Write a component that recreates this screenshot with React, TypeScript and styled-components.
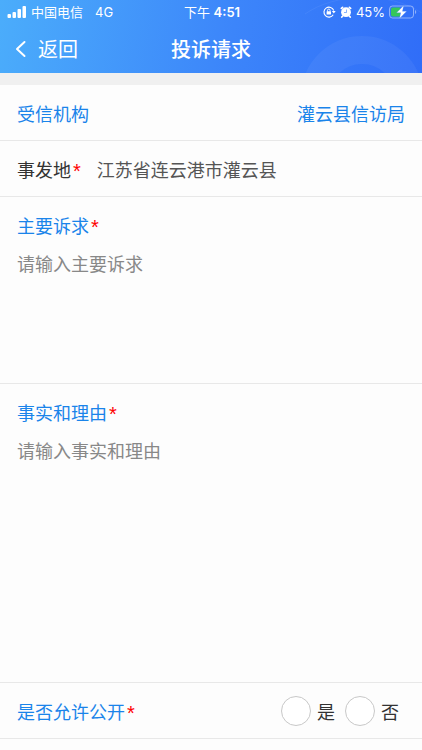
import React, { useState } from "react";
import styled, { createGlobalStyle } from "styled-components";

const cjk = `"Noto Sans CJK SC", sans-serif`;
const latin = `Inter, "Noto Sans CJK SC", sans-serif`;

const GlobalStyle = createGlobalStyle`
  *, *::before, *::after { box-sizing: border-box; }
  body { margin: 0; background: #fdfdfd; font-family: ${cjk}; font-size: 18px; line-height: 28px; color: #333; }
  input, textarea, button { font: inherit; color: inherit; }
`;

const Header = styled.header`
  position: relative;
  overflow: hidden;
  color: #fff;
  background: linear-gradient(100deg, #4badfb 0%, #3c85fa 55%, #306df8 100%);
`;

const Rings = styled.svg`
  position: absolute;
  right: 0;
  top: 0;
  width: 122px;
  height: 100%;
`;

const StatusBar = styled.div`
  position: relative;
  display: grid;
  grid-template-columns: 1fr auto 1fr;
  align-items: center;
  height: 24px;
  padding: 0 5px 0 7px;
  font-family: ${latin};
  font-size: 13px;
  line-height: 20px;
`;

const StatusGroup = styled.div<{ $end?: boolean }>`
  display: flex;
  align-items: center;
  justify-content: ${(p) => (p.$end ? "flex-end" : "flex-start")};
  gap: 4px;
`;

const Network = styled.span`
  margin-left: 8px;
`;

const Clock = styled.time`
  white-space: nowrap;
`;

const Digits = styled.span`
  font-weight: 600;
`;

const NavBar = styled.nav`
  position: relative;
  display: grid;
  grid-template-columns: 1fr auto 1fr;
  align-items: center;
  height: 49px;
  padding: 0 14px;
`;

const BackButton = styled.button`
  display: flex;
  align-items: center;
  justify-self: start;
  gap: 10px;
  padding: 0;
  border: 0;
  background: none;
  font-size: 20px;
`;

const Title = styled.h1`
  margin: 0;
  font-size: 20px;
  font-weight: 500;
`;

const Form = styled.form`
  border-top: 12px solid #f0f0f0;
`;

const Row = styled.div<{ $spread?: boolean }>`
  display: flex;
  align-items: center;
  justify-content: ${(p) => (p.$spread ? "space-between" : "flex-start")};
  gap: 16px;
  min-height: 56px;
  padding: 0 17px;
  border-bottom: 1px solid #e8e8e8;
`;

const Label = styled.label<{ $dark?: boolean }>`
  display: flex;
  align-items: center;
  gap: 2px;
  flex: none;
  color: ${(p) => (p.$dark ? "#333" : "#1a84ea")};
`;

const Star = styled.span`
  padding-top: 4px;
  color: #f00;
  font-family: "Liberation Sans", sans-serif;
  font-size: 20px;
  line-height: 22px;
`;

const Agency = styled.output`
  color: #1a84ea;
`;

const PlaceInput = styled.input`
  flex: 1;
  min-width: 0;
  padding: 0;
  border: 0;
  outline: 0;
  background: none;
  color: #555;
`;

const Block = styled.div`
  padding: 14px 17px 0;
  border-bottom: 1px solid #e8e8e8;
`;

const TextArea = styled.textarea<{ $tall?: boolean }>`
  display: block;
  width: 100%;
  height: ${(p) => (p.$tall ? 246 : 134)}px;
  margin-top: 10px;
  padding: 0;
  border: 0;
  outline: 0;
  resize: none;
  background: none;
  &::placeholder { color: #888; opacity: 1; }
`;

const Options = styled.fieldset`
  display: flex;
  gap: 10px;
  margin: 0;
  padding: 0 6px 0 0;
  border: 0;
`;

const Option = styled.label`
  display: flex;
  align-items: center;
  gap: 6px;
`;

const Radio = styled.input`
  appearance: none;
  width: 30px;
  height: 30px;
  margin: 0;
  border: 1px solid #c8c8c8;
  border-radius: 50%;
  background: #fff;
  &:checked { border: 9px solid #1a84ea; }
`;

const SignalIcon = () => (
  <svg width="20" height="14" viewBox="0 0 20 14" fill="#fff" aria-hidden="true">
    <rect x="0.5" y="9" width="3.5" height="4" rx="1" />
    <rect x="5.5" y="7" width="3.5" height="6" rx="1" />
    <rect x="10.5" y="4" width="3.5" height="9" rx="1" />
    <rect x="15.5" y="1" width="3.5" height="12" rx="1" />
  </svg>
);

const LockIcon = () => (
  <svg width="13" height="12" viewBox="0 0 13 12" fill="none" stroke="#fff" aria-hidden="true">
    <path d="M10.2 8.8A5 5 0 1 1 10.7 4.5" strokeWidth="1.1" />
    <path d="M8.9 5h3.8l-1.9 2.6z" fill="#fff" stroke="none" />
    <rect x="3.6" y="5.3" width="4.4" height="3.3" rx="0.4" fill="#fff" stroke="none" />
    <path d="M4.5 5.6V4.4a1.3 1.3 0 0 1 2.6 0v1.2" strokeWidth="0.9" />
  </svg>
);

const AlarmIcon = () => (
  <svg width="12" height="12" viewBox="0 0 12 12" aria-hidden="true">
    <circle cx="6" cy="6.2" r="4.9" fill="#fff" />
    <path d="M1.4 2.4 2.6 1.3M10.6 2.4 9.4 1.3M2.5 10.2l-.7.9M9.5 10.2l.7.9" stroke="#fff" strokeWidth="1.7" strokeLinecap="round" />
    <path d="M6.5 3.5v3H4" fill="none" stroke="#3b7ff9" strokeWidth="0.8" strokeOpacity="0.75" />
  </svg>
);

const BatteryIcon = () => (
  <svg width="28" height="14" viewBox="0 0 28 14" aria-hidden="true">
    <rect x="0.5" y="1" width="24" height="12" rx="3" fill="none" stroke="#fff" strokeOpacity="0.45" />
    <path d="M4 2.5h7v9H4a2 2 0 0 1-2-2v-5a2 2 0 0 1 2-2z" fill="#35c759" />
    <path d="M26 5c1.7.6 1.7 3.4 0 4z" fill="#fff" fillOpacity="0.45" />
    <path d="M14.7 0.5 7.5 7.8h4.2l-1.2 5.7 7.2-7.3h-4.2z" fill="#fff" stroke="#3b7ff9" strokeWidth="0.3" />
  </svg>
);

const BackIcon = () => (
  <svg width="14" height="18" viewBox="0 0 14 18" fill="none" stroke="#fff" strokeWidth="2" strokeLinecap="round" strokeLinejoin="round" aria-hidden="true">
    <path d="M10.5 2 3 9l7.5 7" />
  </svg>
);

export default function App() {
  const [place, setPlace] = useState("江苏省连云港市灌云县");

  return (
    <>
      <GlobalStyle />
      <Header>
        <Rings viewBox="0 0 122 73" preserveAspectRatio="xMaxYMin slice" aria-hidden="true">
          <circle cx="62" cy="97" r="47" fill="none" stroke="#fff" strokeOpacity="0.05" strokeWidth="28" />
          <path d="M5 14C35-7 88-9 122 13" fill="none" stroke="#fff" strokeOpacity="0.06" />
        </Rings>
        <StatusBar>
          <StatusGroup>
            <SignalIcon />
            <span>中国电信</span>
            <Network>4G</Network>
          </StatusGroup>
          <Clock>
            下午 <Digits>4:51</Digits>
          </Clock>
          <StatusGroup $end>
            <LockIcon />
            <AlarmIcon />
            <span>45%</span>
            <BatteryIcon />
          </StatusGroup>
        </StatusBar>
        <NavBar>
          <BackButton type="button">
            <BackIcon />
            返回
          </BackButton>
          <Title>投诉请求</Title>
        </NavBar>
      </Header>
      <Form>
        <Row $spread>
          <Label htmlFor="agency">受信机构</Label>
          <Agency id="agency">灌云县信访局</Agency>
        </Row>
        <Row>
          <Label htmlFor="place" $dark>
            事发地<Star>*</Star>
          </Label>
          <PlaceInput id="place" value={place} onChange={(e) => setPlace(e.target.value)} />
        </Row>
        <Block>
          <Label htmlFor="appeal">
            主要诉求<Star>*</Star>
          </Label>
          <TextArea id="appeal" placeholder="请输入主要诉求" />
        </Block>
        <Block>
          <Label htmlFor="reason">
            事实和理由<Star>*</Star>
          </Label>
          <TextArea id="reason" $tall placeholder="请输入事实和理由" />
        </Block>
        <Row $spread>
          <Label as="span" id="public-label">
            是否允许公开<Star>*</Star>
          </Label>
          <Options aria-labelledby="public-label">
            <Option>
              <Radio type="radio" name="public" value="yes" />是
            </Option>
            <Option>
              <Radio type="radio" name="public" value="no" />否
            </Option>
          </Options>
        </Row>
      </Form>
    </>
  );
}
